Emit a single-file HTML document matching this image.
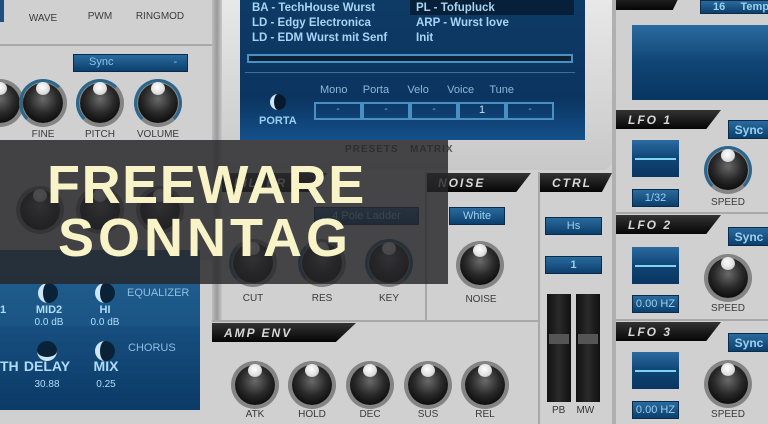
<!DOCTYPE html>
<html><head><meta charset="utf-8"><style>
*{margin:0;padding:0;box-sizing:border-box}
body{width:768px;height:424px;overflow:hidden;background:#d0d0d0;position:relative;font-family:"Liberation Sans",Arial,sans-serif}
.a{position:absolute}
.lbl{position:absolute;font-size:10px;color:#3a3a3a;text-align:center;width:60px;margin-left:-30px}
.btn{position:absolute;background:linear-gradient(#2a6a9e,#0c3f6c);border:1px solid #0a2c4a;color:#9cd0f0;font-size:11px;font-weight:bold;text-align:center}
.k{position:absolute;width:40px;height:40px;margin:-20px 0 0 -20px;border-radius:50%;background:radial-gradient(circle at 50% 40%,#6a6a6a,#2a2a2a 45%,#0e0e0e 75%);box-shadow:0 0 0 4px rgba(40,40,40,.45)}
.k:after{content:"";position:absolute;left:13px;top:-1px;width:14px;height:13px;border-radius:50%;background:radial-gradient(circle at 45% 40%,#fff,#ddd 60%,#999)}
.arc{position:absolute;width:48px;height:48px;margin:-24px 0 0 -24px;border-radius:50%;border:3px solid transparent;border-left-color:#2f9be0;border-top-color:#2f9be0;border-right-color:#2f9be0}
.hd{position:absolute;height:19px;background:linear-gradient(#333,#050505);clip-path:polygon(0 0,100% 0,86% 100%,0 100%);color:#d8d8d8;font-style:italic;font-weight:bold;font-size:12px;letter-spacing:2px;padding:3px 0 0 12px}
.blue{position:absolute;background:linear-gradient(#2c6aa0,#0f4575 50%,#093560)}
.dl{position:absolute;background:#a8a8a8}
</style></head><body>
<div class="dl" style="left:0;top:44px;width:212px;height:2px"></div>
<div class="lbl" style="left:43px;top:13px">WAVE</div>
<div class="lbl" style="left:100px;top:11px">PWM</div>
<div class="lbl" style="left:160px;top:11px">RINGMOD</div>
<div class="a" style="left:0;top:0;width:4px;height:22px;background:#1d4f80"></div>
<div class="btn" style="left:73px;top:54px;width:115px;height:18px;font-weight:normal;text-align:left;padding:1px 0 0 15px;color:#8cc4ea">Sync<span style="margin-left:60px">-</span></div>
<div class="k" style="left:0;top:103px"></div>
<div class="arc" style="left:43px;top:103px;border-right-color:transparent"></div><div class="k" style="left:43px;top:103px"></div>
<div class="arc" style="left:100px;top:103px;border-right-color:transparent"></div><div class="k" style="left:100px;top:103px"></div>
<div class="arc" style="left:158px;top:103px"></div><div class="k" style="left:158px;top:103px"></div>
<div class="lbl" style="left:43px;top:129px">FINE</div>
<div class="lbl" style="left:100px;top:129px">PITCH</div>
<div class="lbl" style="left:158px;top:129px">VOLUME</div>
<div class="a" style="left:212px;top:0;width:10px;height:320px;background:linear-gradient(90deg,#bbb,#9a9a9a,#c8c8c8)"></div>
<div class="a" style="left:222px;top:0;width:390px;height:170px;background:linear-gradient(#e8e8e8,#c8c8c8);border-radius:0 0 10px 10px"></div>
<div class="blue" style="left:240px;top:0;width:345px;height:140px;background:linear-gradient(#0e3a66,#0b3560 70%,#14508a)"></div>
<div class="a" style="left:410px;top:0;width:164px;height:15px;background:#071f38"></div>
<div class="a" style="left:252px;top:1px;font-size:11.5px;font-weight:bold;color:#a8d4f4;line-height:15px">BA - TechHouse Wurst<br>LD - Edgy Electronica<br>LD - EDM Wurst mit Senf</div>
<div class="a" style="left:416px;top:1px;font-size:11.5px;font-weight:bold;color:#a8d4f4;line-height:15px">PL - Tofupluck<br>ARP - Wurst love<br>Init</div>
<div class="a" style="left:247px;top:54px;width:326px;height:9px;border:2px solid #4a90c4;background:#0a2236"></div>
<div class="a" style="left:245px;top:72px;width:330px;height:1px;background:#3c6f98"></div>
<div class="a" style="left:320px;top:84px;font-size:11px;color:#8cb8da">Mono&nbsp;&nbsp;&nbsp;&nbsp;&nbsp;Porta&nbsp;&nbsp;&nbsp;&nbsp;&nbsp;&nbsp;Velo&nbsp;&nbsp;&nbsp;&nbsp;&nbsp;&nbsp;Voice&nbsp;&nbsp;&nbsp;&nbsp;&nbsp;Tune</div>
<div class="a" style="left:314px;top:102px;display:flex">
<div style="width:48px;height:18px;border:2px solid #4a90c4;color:#8cb8da;font-size:10px;text-align:center">-</div>
<div style="width:48px;height:18px;border:2px solid #4a90c4;color:#8cb8da;font-size:10px;text-align:center">-</div>
<div style="width:48px;height:18px;border:2px solid #4a90c4;color:#8cb8da;font-size:10px;text-align:center">-</div>
<div style="width:48px;height:18px;border:2px solid #4a90c4;color:#cde;font-size:11px;text-align:center">1</div>
<div style="width:48px;height:18px;border:2px solid #4a90c4;color:#8cb8da;font-size:10px;text-align:center">-</div></div>
<div class="a" style="left:270px;top:94px;width:16px;height:16px;border-radius:50%;background:#061a2e;border-left:4px solid #cfe6f6"></div>
<div class="a" style="left:259px;top:115px;font-size:11px;font-weight:bold;color:#9cd0f0">PORTA</div>
<div class="a" style="left:345px;top:144px;font-size:10px;font-weight:bold;color:#555;letter-spacing:1px">PRESETS&nbsp;&nbsp;&nbsp;MATRIX</div>
<div class="a" style="left:612px;top:0;width:4px;height:424px;background:#b0b0b0"></div>
<div class="hd" style="left:616px;top:-9px;width:66px"></div>
<div class="btn" style="left:700px;top:0;width:70px;height:14px;text-align:left;padding-left:12px">16&nbsp;&nbsp;&nbsp;&nbsp;&nbsp;Temp</div>
<div class="blue" style="left:632px;top:25px;width:136px;height:75px"></div>
<div class="hd" style="left:616px;top:110px;width:105px">LFO 1</div>
<div class="btn" style="left:728px;top:120px;width:42px;height:19px;font-size:12px;padding-top:2px">Sync</div>
<div class="blue" style="left:632px;top:140px;width:47px;height:37px"><div class="a" style="left:3px;top:18px;width:41px;height:2px;background:#7fd4f0"></div></div>
<div class="btn" style="left:632px;top:189px;width:47px;height:18px;font-weight:normal;padding-top:2px">1/32</div>
<div class="arc" style="left:728px;top:170px"></div><div class="k" style="left:728px;top:170px"></div>
<div class="lbl" style="left:728px;top:197px">SPEED</div>
<div class="dl" style="left:616px;top:212px;width:152px;height:2px"></div>
<div class="hd" style="left:616px;top:215px;width:105px">LFO 2</div>
<div class="btn" style="left:728px;top:227px;width:42px;height:19px;font-size:12px;padding-top:2px">Sync</div>
<div class="blue" style="left:632px;top:247px;width:47px;height:37px"><div class="a" style="left:3px;top:18px;width:41px;height:2px;background:#7fd4f0"></div></div>
<div class="btn" style="left:632px;top:295px;width:47px;height:18px;font-weight:normal;padding-top:2px">0.00 HZ</div>
<div class="k" style="left:728px;top:278px"></div>
<div class="lbl" style="left:728px;top:303px">SPEED</div>
<div class="dl" style="left:616px;top:319px;width:152px;height:2px"></div>
<div class="hd" style="left:616px;top:322px;width:105px">LFO 3</div>
<div class="btn" style="left:728px;top:333px;width:42px;height:19px;font-size:12px;padding-top:2px">Sync</div>
<div class="blue" style="left:632px;top:352px;width:47px;height:37px"><div class="a" style="left:3px;top:18px;width:41px;height:2px;background:#7fd4f0"></div></div>
<div class="btn" style="left:632px;top:401px;width:47px;height:18px;font-weight:normal;padding-top:2px">0.00 HZ</div>
<div class="k" style="left:728px;top:384px"></div>
<div class="lbl" style="left:728px;top:409px">SPEED</div>
<div class="dl" style="left:538px;top:172px;width:2px;height:252px"></div>
<div class="hd" style="left:540px;top:173px;width:72px">CTRL</div>
<div class="btn" style="left:545px;top:217px;width:57px;height:18px;font-weight:normal;padding-top:2px">Hs</div>
<div class="btn" style="left:545px;top:256px;width:57px;height:18px;padding-top:2px">1</div>
<div class="a" style="left:547px;top:294px;width:24px;height:108px;background:linear-gradient(90deg,#111,#2a2a2a,#111)"><div class="a" style="left:2px;top:40px;width:20px;height:10px;background:#555"></div></div>
<div class="a" style="left:576px;top:294px;width:24px;height:108px;background:linear-gradient(90deg,#111,#2a2a2a,#111)"><div class="a" style="left:2px;top:40px;width:20px;height:10px;background:#555"></div></div>
<div class="a" style="left:552px;top:405px;font-size:10px;color:#333">PB&nbsp;&nbsp;&nbsp;&nbsp;MW</div>
<div class="hd" style="left:426px;top:173px;width:105px">NOISE</div>
<div class="dl" style="left:425px;top:172px;width:2px;height:148px"></div>
<div class="btn" style="left:449px;top:207px;width:56px;height:18px;font-weight:normal;padding-top:2px">White</div>
<div class="k" style="left:480px;top:265px"></div>
<div class="lbl" style="left:481px;top:294px">NOISE</div>
<div class="hd" style="left:222px;top:173px;width:105px">FILTER</div>
<div class="btn" style="left:314px;top:207px;width:105px;height:18px;font-weight:normal;padding-top:2px">4 Pole Ladder</div>
<div class="arc" style="left:253px;top:263px;border-right-color:transparent;border-top-color:transparent"></div><div class="k" style="left:253px;top:263px"></div>
<div class="arc" style="left:322px;top:263px;border-right-color:transparent;border-top-color:transparent"></div><div class="k" style="left:322px;top:263px"></div>
<div class="arc" style="left:389px;top:263px"></div><div class="k" style="left:389px;top:263px"></div>
<div class="lbl" style="left:253px;top:293px">CUT</div>
<div class="lbl" style="left:322px;top:293px">RES</div>
<div class="lbl" style="left:389px;top:293px">KEY</div>
<div class="dl" style="left:212px;top:320px;width:326px;height:2px"></div>
<div class="hd" style="left:212px;top:323px;width:144px">AMP ENV</div>
<div class="k" style="left:255px;top:385px"></div>
<div class="k" style="left:312px;top:385px"></div>
<div class="k" style="left:370px;top:385px"></div>
<div class="k" style="left:428px;top:385px"></div>
<div class="k" style="left:485px;top:385px"></div>
<div class="lbl" style="left:255px;top:409px">ATK</div>
<div class="lbl" style="left:312px;top:409px">HOLD</div>
<div class="lbl" style="left:370px;top:409px">DEC</div>
<div class="lbl" style="left:428px;top:409px">SUS</div>
<div class="lbl" style="left:485px;top:409px">REL</div>
<div class="a" style="left:0;top:140px;width:212px;height:120px;background:#c4c4c4"></div>
<div class="a" style="left:0;top:250px;width:200px;height:76px;background:linear-gradient(#23608f,#1a5585)"></div>
<div class="a" style="left:0;top:326px;width:200px;height:84px;background:linear-gradient(#174f80,#0b3a66)"></div>
<div class="a" style="left:127px;top:287px;font-size:11px;color:#8fbfe0">EQUALIZER</div>
<div class="a" style="left:128px;top:342px;font-size:11px;color:#8fbfe0">CHORUS</div>
<div class="a" style="left:38px;top:283px;width:20px;height:20px;border-radius:50%;background:#0a2238;border-left:5px solid #cfe6f6"></div>
<div class="a" style="left:95px;top:283px;width:20px;height:20px;border-radius:50%;background:#0a2238;border-left:5px solid #cfe6f6"></div>
<div class="a" style="left:37px;top:341px;width:20px;height:20px;border-radius:50%;background:#0a2238;border-bottom:4px solid #cfe6f6"></div>
<div class="a" style="left:95px;top:341px;width:20px;height:20px;border-radius:50%;background:#0a2238;border-left:5px solid #cfe6f6"></div>
<div class="a" style="left:0;top:304px;font-size:11px;font-weight:bold;color:#b0dcf8;line-height:12px">1</div>
<div class="a" style="left:34px;top:304px;width:30px;text-align:center;font-size:11px;font-weight:bold;color:#b0dcf8;line-height:12px">MID2<br><span style="font-size:10px;font-weight:normal">0.0 dB</span></div>
<div class="a" style="left:90px;top:304px;width:30px;text-align:center;font-size:11px;font-weight:bold;color:#b0dcf8;line-height:12px">HI<br><span style="font-size:10px;font-weight:normal">0.0 dB</span></div>
<div class="a" style="left:0;top:358px;font-size:14px;font-weight:bold;color:#b0dcf8;line-height:16px">TH</div>
<div class="a" style="left:22px;top:358px;width:50px;text-align:center;font-size:14px;font-weight:bold;color:#b0dcf8;line-height:16px">DELAY<br><span style="font-size:10px;font-weight:normal">30.88</span></div>
<div class="a" style="left:88px;top:358px;width:36px;text-align:center;font-size:14px;font-weight:bold;color:#b0dcf8;line-height:16px">MIX<br><span style="font-size:10px;font-weight:normal">0.25</span></div>
<div class="k" style="left:40px;top:210px"></div>
<div class="k" style="left:100px;top:210px"></div>
<div class="k" style="left:160px;top:210px"></div>
<div class="a" style="left:0;top:140px;width:448px;height:144px;background:rgba(38,38,40,.82)"></div>
<div class="a" style="left:47px;top:155px;font-size:54px;font-weight:bold;line-height:60px;color:#f8f4c8;letter-spacing:1.6px">FREEWARE</div>
<div class="a" style="left:58px;top:208px;font-size:54px;font-weight:bold;line-height:60px;color:#f8f4c8;letter-spacing:4px">SONNTAG</div>
</body></html>
